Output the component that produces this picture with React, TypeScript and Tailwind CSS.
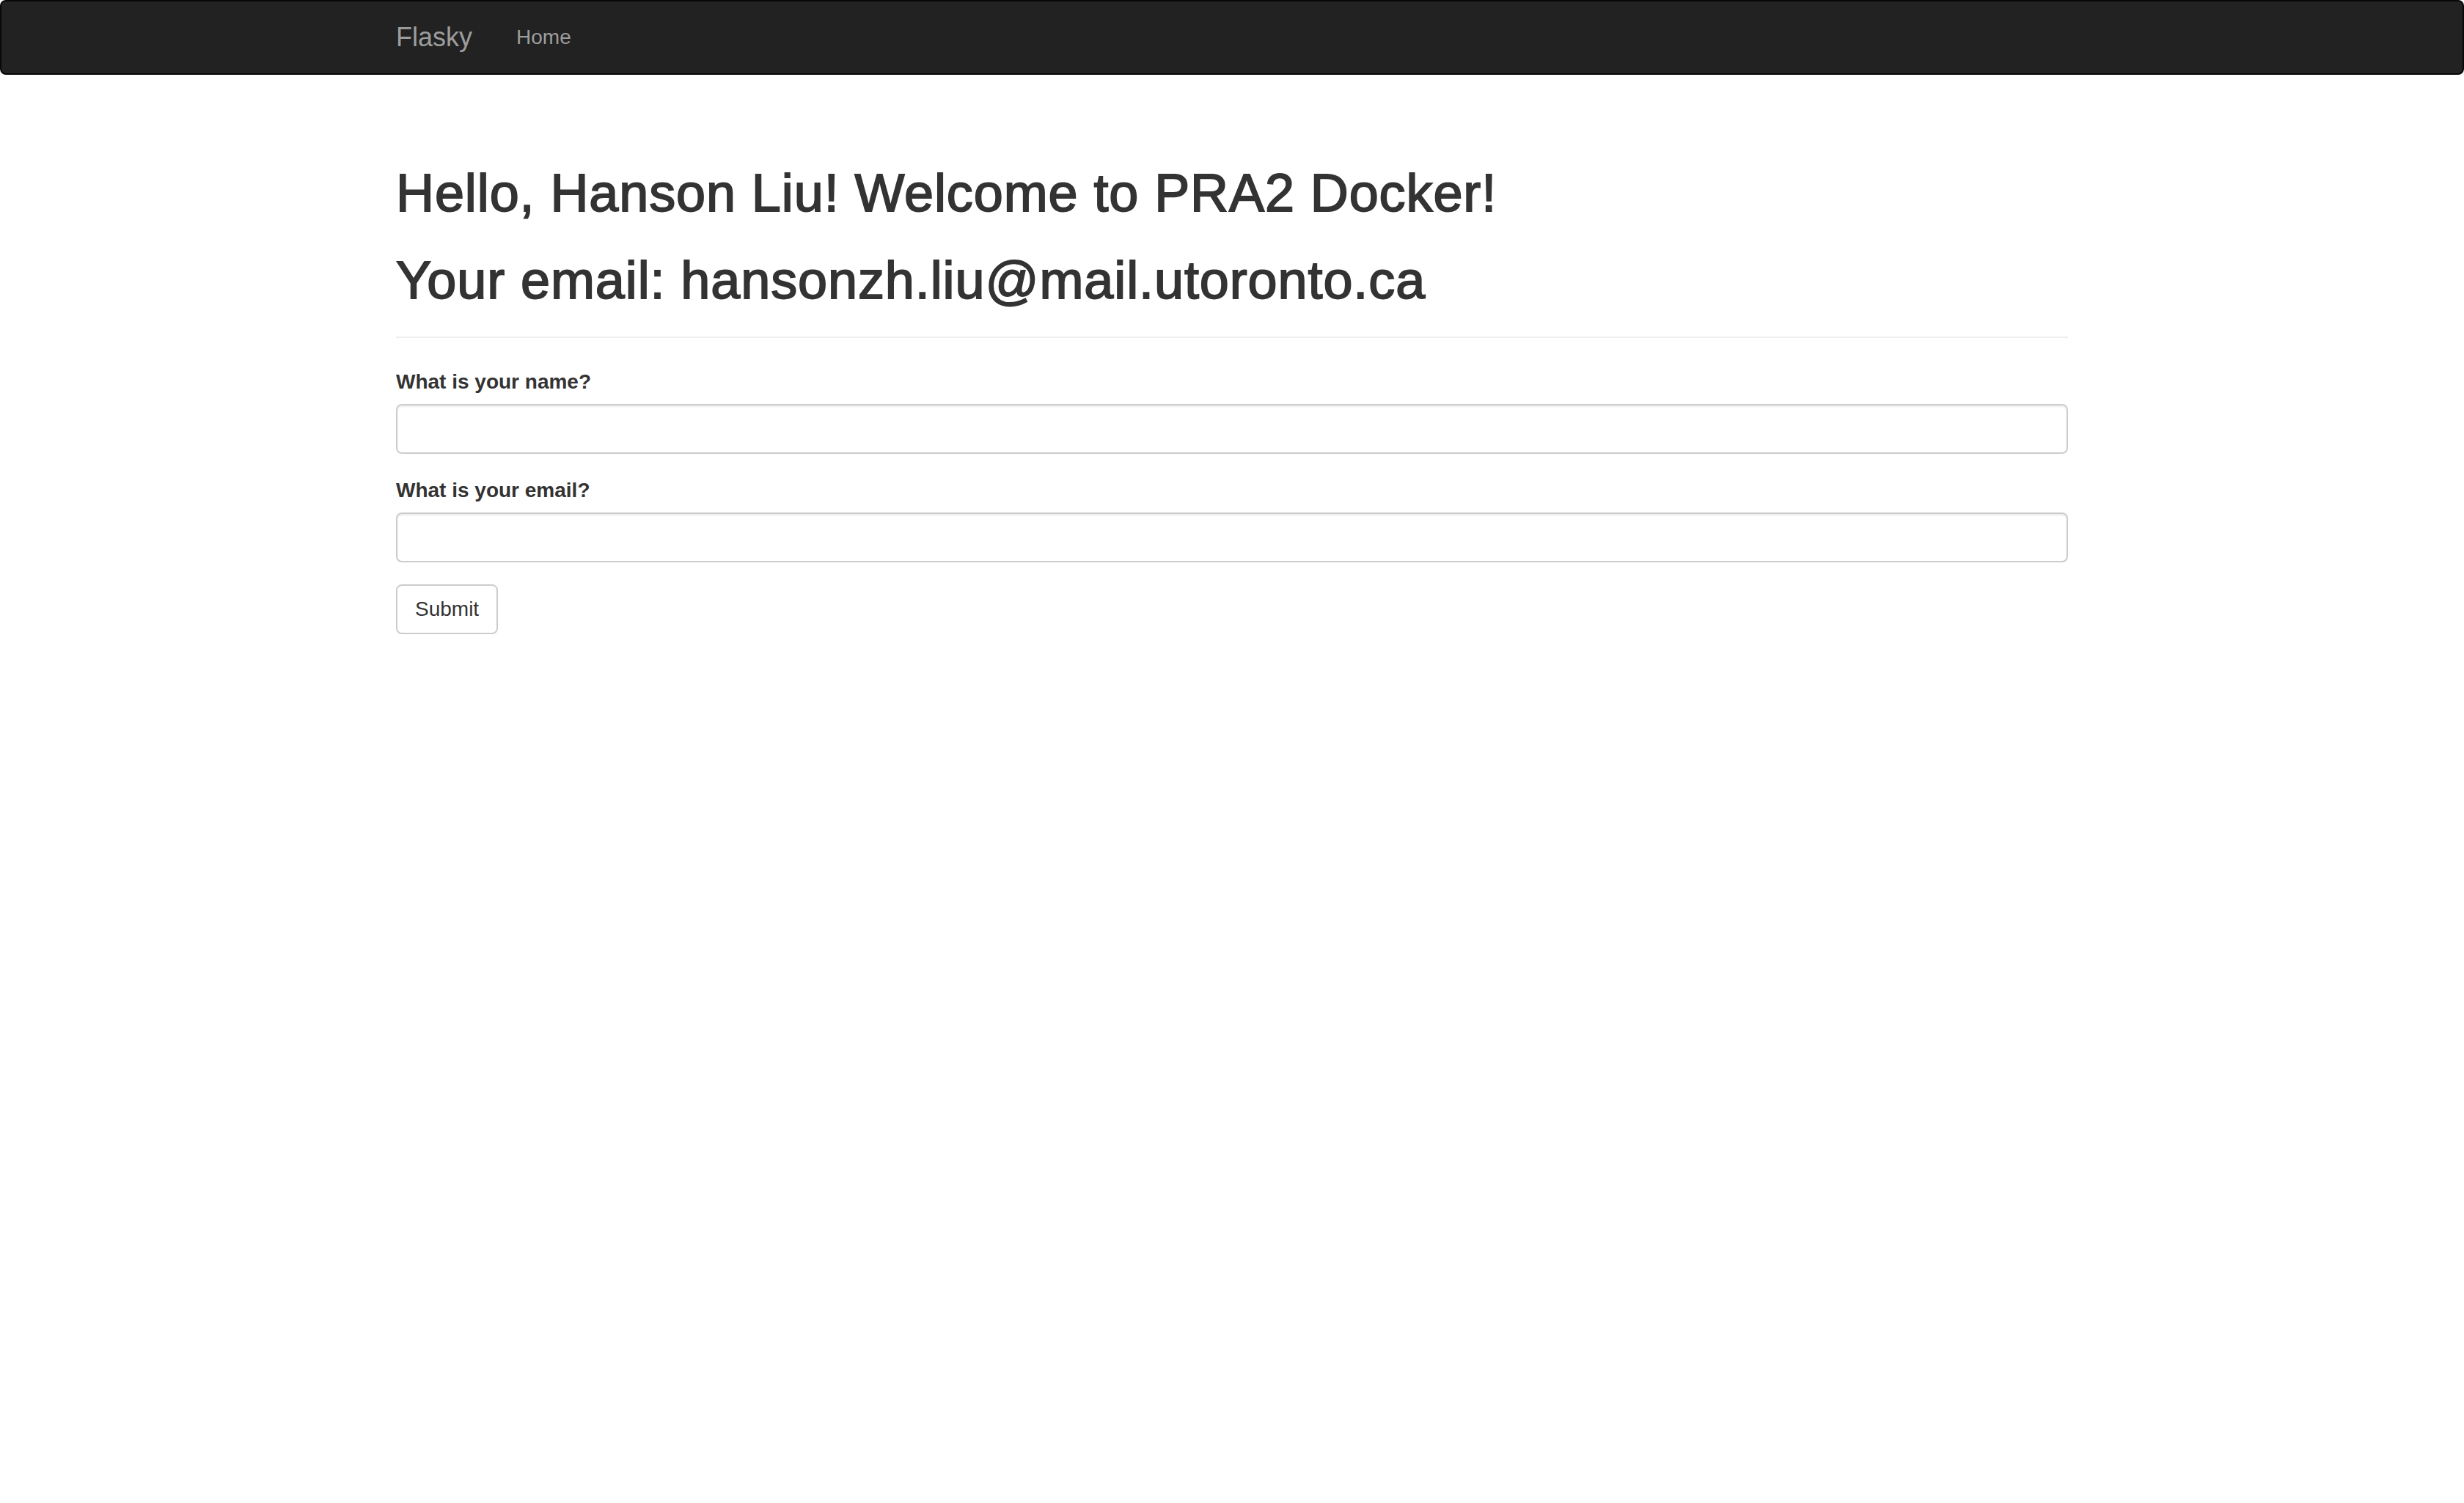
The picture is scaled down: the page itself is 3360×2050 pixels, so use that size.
import React from "react";

export default function App() {
  return (
    <div className="min-h-screen bg-white text-[#333333] font-['Liberation_Sans',Arial,sans-serif]">
      <nav className="h-[102px] bg-[#222222] border-2 border-[#080808] rounded-[8px]">
        <div className="w-[2340px] mx-auto px-[30px] h-full flex items-center">
          <a className="-ml-[30px] px-[30px] py-[28px] text-[36px] leading-[40px] text-[#9d9d9d]">
            Flasky
          </a>
          <ul className="flex">
            <li>
              <a className="block px-[30px] py-[28px] text-[28px] leading-[40px] text-[#9d9d9d]">
                Home
              </a>
            </li>
          </ul>
        </div>
      </nav>

      <div className="w-[2340px] mx-auto px-[30px] pt-[122px]">
        <div className="pb-[37px] border-b-2 border-[#eeeeee]">
          <h1 className="m-0 text-[72px] leading-[79.2px] font-medium tracking-[0.9px] [-webkit-text-stroke:1.8px_#333333]">
            Hello, Hanson Liu! Welcome to PRA2 Docker!
          </h1>
          <h1 className="m-0 mt-[40px] text-[72px] leading-[79.2px] font-medium tracking-[0.9px] [-webkit-text-stroke:1.8px_#333333]">
            Your email: hansonzh.liu@mail.utoronto.ca
          </h1>
        </div>

        <form className="mt-[40px]" onSubmit={(e) => e.preventDefault()}>
          <div className="mb-[30px]">
            <label className="block mb-[10px] text-[28px] leading-[40px] font-bold">
              What is your name?
            </label>
            <input
              type="text"
              className="block w-full h-[68px] px-[24px] text-[28px] bg-white border-2 border-[#cccccc] rounded-[8px] shadow-[inset_0_2px_2px_rgba(0,0,0,0.075)] outline-none"
            />
          </div>
          <div className="mb-[30px]">
            <label className="block mb-[10px] text-[28px] leading-[40px] font-bold">
              What is your email?
            </label>
            <input
              type="text"
              className="block w-full h-[68px] px-[24px] text-[28px] bg-white border-2 border-[#cccccc] rounded-[8px] shadow-[inset_0_2px_2px_rgba(0,0,0,0.075)] outline-none"
            />
          </div>
          <button
            type="submit"
            className="h-[68px] px-[24px] text-[28px] leading-[40px] bg-white text-[#333333] border-2 border-[#cccccc] rounded-[8px]"
          >
            Submit
          </button>
        </form>
      </div>
    </div>
  );
}
